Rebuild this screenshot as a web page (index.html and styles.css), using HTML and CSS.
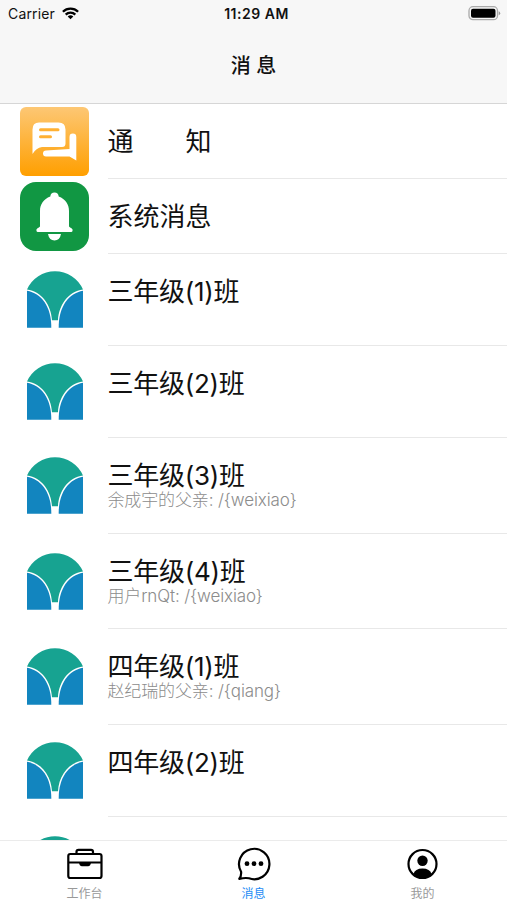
FILE: index.html
```html
<!DOCTYPE html>
<html lang="zh-CN">
<head>
    <meta charset="UTF-8">
    <meta name="viewport" content="width=device-width, initial-scale=1.0">
    <title>消息</title>
    <link rel="stylesheet" href="styles.css">
</head>
<body>
    <svg class="defs" width="0" height="0">
        <symbol id="logo" viewBox="0 0 56 56.5">
            <path fill="#17a391" d="M0 18.300A30.600 30.600 0 0 1 56 18.300C41 20.500 31.800 34 31 49H25C24.200 34 15 20.500 0 18.300z"/>
            <path fill="#1285bf" d="M0 19.600C14 22 24.500 35 24.300 56.500H0z"/>
            <path fill="#1285bf" d="M56 19.600C42 22 31.500 35 31.700 56.500H56z"/>
        </symbol>
    </svg>
    <div class="app">
        <header class="header">
            <div class="status">
                <div class="carrier">
                    <span>Carrier</span>
                    <svg width="17" height="13" viewBox="0 0 17 13" fill="none" stroke="#000" stroke-width="2.300">
                        <path d="M.9 4.700a10.800 10.800 0 0 1 15.200 0M3.700 7.600a6.800 6.800 0 0 1 9.600 0"/>
                        <path fill="#000" stroke="none" d="M8.500 12.300L5.700 9.500a4 4 0 0 1 5.600 0z"/>
                    </svg>
                </div>
                <div class="time">11:29 AM</div>
                <svg class="battery" width="33" height="15" viewBox="0 0 33 15">
                    <rect x="1" y=".7" width="28.500" height="13" rx="4" fill="none" stroke="#aaa" stroke-width="1.300"/>
                    <rect x="3" y="2.700" width="24.500" height="9" rx="2" fill="#000"/>
                    <path fill="#999" d="M30.700 5.200q1.500.5 1.500 2t-1.500 2z"/>
                </svg>
            </div>
            <h1>消 息</h1>
        </header>

        <main class="list">
            <div class="row small">
                <div class="pic">
                    <svg width="69" height="69" viewBox="0 0 69 69">
                        <defs>
                            <linearGradient id="orange" x1="0" y1="0" x2="0" y2="1">
                                <stop offset="0" stop-color="#fdc774"/>
                                <stop offset="1" stop-color="#ff9f00"/>
                            </linearGradient>
                        </defs>
                        <rect width="69" height="69" rx="6" fill="url(#orange)"/>
                        <path fill="#fff" d="M19 15.500H38.500Q45.500 15.500 45.500 22.500V36.500Q45.500 40 42 40H22Q16 41 12.500 47V22.500Q12.500 15.500 19 15.500z"/>
                        <path fill="none" stroke="#ffb134" stroke-width="3" stroke-linecap="round" d="M20.500 22.700H38M20.500 29.700H30.500"/>
                        <path fill="#fff" d="M49.500 30a3.400 3.400 0 0 1 6.800 0V53.500L49.500 49.500H26a3 3 0 0 1 0-6L49.500 42z"/>
                    </svg>
                </div>
                <div class="info"><div class="name">通　　知</div></div>
            </div>
            <div class="row small">
                <div class="pic">
                    <svg width="69" height="69" viewBox="0 0 69 69">
                        <rect width="69" height="69" rx="16" fill="#119743"/>
                        <path fill="#fff" d="M34.500 10.500c2.500 0 4 1.600 4.200 4C45.500 17 49 22.500 49 29V44.500Q50 45.500 51.500 46.200Q53.500 47.500 52.300 49.500Q51.500 50 50.500 50H18.500Q17.500 50 16.700 49.500Q15.500 47.500 17.500 46.200Q19 45.500 20 44.500V29C20 22.500 23.500 17 30.300 14.500c.2-2.400 1.700-4 4.200-4zM28 52H41Q39.800 58.500 34.500 58.500T28 52z"/>
                    </svg>
                </div>
                <div class="info"><div class="name">系统消息</div></div>
            </div>
            <div class="row">
                <div class="pic"><svg class="logo"><use href="#logo"/></svg></div>
                <div class="info"><div class="name">三年级(1)班</div></div>
            </div>
            <div class="row">
                <div class="pic"><svg class="logo"><use href="#logo"/></svg></div>
                <div class="info"><div class="name">三年级(2)班</div></div>
            </div>
            <div class="row tall">
                <div class="pic"><svg class="logo"><use href="#logo"/></svg></div>
                <div class="info">
                    <div class="name">三年级(3)班</div>
                    <div class="last">余成宇的父亲: /{weixiao}</div>
                </div>
            </div>
            <div class="row tall">
                <div class="pic"><svg class="logo"><use href="#logo"/></svg></div>
                <div class="info">
                    <div class="name">三年级(4)班</div>
                    <div class="last">用户rnQt: /{weixiao}</div>
                </div>
            </div>
            <div class="row tall">
                <div class="pic"><svg class="logo"><use href="#logo"/></svg></div>
                <div class="info">
                    <div class="name">四年级(1)班</div>
                    <div class="last">赵纪瑞的父亲: /{qiang}</div>
                </div>
            </div>
            <div class="row">
                <div class="pic"><svg class="logo"><use href="#logo"/></svg></div>
                <div class="info"><div class="name">四年级(2)班</div></div>
            </div>
            <div class="row tall">
                <div class="pic"><svg class="logo"><use href="#logo"/></svg></div>
                <div class="info"></div>
            </div>
        </main>

        <nav class="tabs">
            <div class="tab">
                <svg width="36" height="34" viewBox="0 0 36 34" fill="none" stroke="#000" stroke-width="2.200">
                    <rect x="1.300" y="7" width="33.200" height="24" rx="2"/>
                    <path d="M9.500 7V4.800q0-2 2-2H24q2 0 2 2V7M1.300 15.500h33.200"/>
                    <path fill="#000" stroke="none" d="M12 15.500h12q-.3 3.700-3 3.700h-6q-2.700 0-3-3.700z"/>
                </svg>
                <span>工作台</span>
            </div>
            <div class="tab active">
                <svg width="34" height="34" viewBox="0 0 34 34" fill="none" stroke="#000" stroke-width="2.200" stroke-linejoin="round">
                    <path d="M4.100 24.700A15.200 15.200 0 1 1 12 31.300Q8.500 30.500 2.300 31.800Q4.500 29 4.100 24.700z"/>
                    <g fill="#000" stroke="none">
                        <circle cx="10" cy="16.700" r="2.400"/>
                        <circle cx="17" cy="16.700" r="2.400"/>
                        <circle cx="24" cy="16.700" r="2.400"/>
                    </g>
                </svg>
                <span>消息</span>
            </div>
            <div class="tab">
                <svg width="34" height="34" viewBox="0 0 34 34">
                    <circle cx="16.500" cy="17" r="14" fill="none" stroke="#000" stroke-width="2.200"/>
                    <circle cx="16.500" cy="13.800" r="5.200"/>
                    <path d="M7.500 27Q9 21.500 16.500 21.500T25.500 27Q21.500 31 16.500 31T7.500 27z"/>
                </svg>
                <span>我的</span>
            </div>
        </nav>
    </div>
</body>
</html>
```
FILE: styles.css
```css
* {
    box-sizing: border-box;
}
body {
    margin: 0;
    font-family: Inter, "Noto Sans CJK SC", sans-serif;
    color: #111;
    background: white;
}
.defs {
    display: block;
}
.app {
    display: flex;
    flex-direction: column;
    height: 900px;
    width: 507px;
    overflow: hidden;
}
.header {
    height: 104px;
    flex: none;
    background: #f7f7f7;
    border-bottom: 1px solid #d6d6d6;
}
.status {
    display: grid;
    grid-template-columns: 1fr auto 1fr;
    align-items: center;
    height: 27px;
    padding: 0 6px 0 8px;
    font-size: 14px;
}
.carrier {
    display: flex;
    align-items: center;
    gap: 7px;
    letter-spacing: 0.15px;
}
.time {
    margin-left: 4px;
    font-weight: 600;
    letter-spacing: 0.5px;
}
.battery {
    justify-self: end;
}
h1 {
    margin: 26px 0 0;
    text-align: center;
    font-size: 20px;
    line-height: 26px;
    font-weight: 500;
}
.list {
    flex: 1;
    min-height: 0;
    overflow: hidden;
}
.row {
    display: flex;
    height: 92px;
}
.row.small {
    height: 75px;
}
.row.tall {
    height: 95.7px;
}
.pic {
    width: 108px;
    padding: 0 0 1px 20px;
    display: flex;
    align-items: center;
}
.logo {
    width: 56px;
    height: 57px;
    margin-left: 6.5px;
}
.info {
    flex: 1;
    padding-top: 24px;
    border-bottom: 1px solid #e8e8e8;
}
.name {
    margin-left: -0.6px;
    font-size: 26px;
    line-height: 28px;
    letter-spacing: -0.25px;
}
.row.small .name {
    letter-spacing: 0;
}
.last {
    margin: -1px 0 0 -0.6px;
    font-size: 17px;
    line-height: 22px;
    font-weight: 300;
    letter-spacing: -0.12px;
    color: #8c8c8c;
}
.tabs {
    display: flex;
    height: 60px;
    flex: none;
    border-top: 1px solid #ebebeb;
    background: white;
}
.tab {
    flex: 1;
    display: flex;
    flex-direction: column;
    align-items: center;
    padding-top: 6px;
    font-size: 12px;
    line-height: 12px;
    color: #999;
}
.tab svg {
    flex: none;
}
.tab span {
    margin-top: 7px;
}
.tab.active {
    color: #1e8cf5;
}
```
